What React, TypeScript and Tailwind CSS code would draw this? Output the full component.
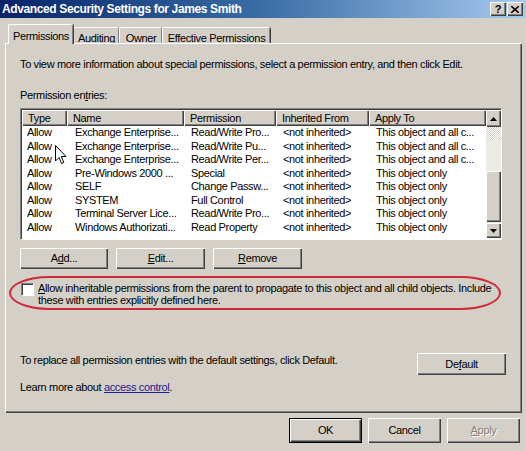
import React from 'react';

const raised = "shadow-[inset_1px_1px_0_#ffffff,inset_-1px_-1px_0_#404040,inset_-2px_-2px_0_#808080]";
const headerCell = "shadow-[inset_1px_1px_0_#ffffff,inset_-1px_-1px_0_#404040,inset_-2px_-2px_0_#808080]";

const columns = [
  { title: "Type", width: "w-[45px]" },
  { title: "Name", width: "w-[117px]" },
  { title: "Permission", width: "w-[92px]" },
  { title: "Inherited From", width: "w-[93px]" },
  { title: "Apply To", width: "w-[117px]" },
];

const rows = [
  ["Exchange Enterprise...", "Read/Write Pro...", "This object and all c..."],
  ["Exchange Enterprise...", "Read/Write Pu...", "This object and all c..."],
  ["Exchange Enterprise...", "Read/Write Per...", "This object and all c..."],
  ["Pre-Windows 2000 ...", "Special", "This object only"],
  ["SELF", "Change Passw...", "This object only"],
  ["SYSTEM", "Full Control", "This object only"],
  ["Terminal Server Lice...", "Read/Write Pro...", "This object only"],
  ["Windows Authorizati...", "Read Property", "This object only"],
];

const tabs = [
  { title: "Auditing", width: "w-[46px]" },
  { title: "Owner", width: "w-[43px]" },
  { title: "Effective Permissions", width: "w-[108px]" },
];

const Button = ({ children, className = "" }: { children: React.ReactNode; className?: string }) => (
  <button className={`flex items-center justify-center bg-[#d4d0c8] ${raised} ${className}`}>{children}</button>
);

const Arrow = ({ down }: { down?: boolean }) => (
  <svg width="7" height="4" viewBox="0 0 7 4" className={down ? "rotate-180" : ""}>
    <path d="M3.5 0 L7 4 L0 4 Z" fill="#000" />
  </svg>
);

export default function App() {
  return (
    <div className="w-[526px] h-[451px] bg-[#d4d0c8] flex flex-col overflow-hidden text-[11px] text-black font-['Liberation_Sans',Arial,sans-serif] tracking-[-0.35px]">
      {/* title bar */}
      <div className="h-[18px] flex items-center justify-between pl-[2px] pr-[3px] bg-gradient-to-r from-[#0a246a] via-[#3a6ea5] to-[#a6caf0]">
        <span className="text-white font-bold text-[12px] tracking-[-0.38px]">Advanced Security Settings for James Smith</span>
        <div className="flex gap-[1px]">
          <div className={`w-[16px] h-[14px] bg-[#d4d0c8] ${raised} flex items-center justify-center font-bold text-[11px] leading-none`}>?</div>
          <div className={`w-[16px] h-[14px] bg-[#d4d0c8] ${raised} flex items-center justify-center`}>
            <svg width="8" height="7" viewBox="0 0 8 7">
              <path d="M0 0 L8 7 M8 0 L0 7" stroke="#000" strokeWidth="1.6" />
            </svg>
          </div>
        </div>
      </div>

      <div className="flex flex-col px-[5px] pt-[6px]">
        {/* tabs */}
        <div className="flex items-end pl-[3px] h-[19px]">
          <div className="relative z-10 w-[65px] h-[20px] -mb-[1px] pt-[3px] text-center bg-[#d4d0c8] border-l border-t border-white rounded-t-[2px] shadow-[inset_-1px_0_0_#808080,1px_0_0_#404040]">
            Permissions
          </div>
          {tabs.map((t) => (
            <div key={t.title} className={`${t.width} h-[16px] pt-[2px] text-center border-l border-t border-white rounded-t-[2px] shadow-[inset_-1px_0_0_#808080,1px_0_0_#404040]`}>
              {t.title}
            </div>
          ))}
        </div>

        {/* panel */}
        <div className="h-[369px] flex flex-col border-l border-t border-white shadow-[inset_-1px_-1px_0_#808080,1px_1px_0_#404040] pl-[14px] pr-[15px] pt-[14px] pb-[18px]">
          <p className="leading-[13px]">To view more information about special permissions, select a permission entry, and then click Edit.</p>
          <p className="leading-[13px] mt-[18px]">Permission en<span className="underline">t</span>ries:</p>

          {/* list */}
          <div className="relative mt-[6px] w-[482px] h-[132px] flex bg-white border border-t-[#808080] border-l-[#808080] border-r-white border-b-white shadow-[inset_1px_1px_0_#404040]">
            <div className="flex flex-col pl-[1px] pt-[1px]">
              <div className="flex h-[16px]">
                {columns.map((c) => (
                  <div key={c.title} className={`${c.width} ${headerCell} bg-[#d4d0c8] pl-[6px] leading-[16px]`}>{c.title}</div>
                ))}
              </div>
              {rows.map((r, i) => (
                <div key={i} className="flex h-[13.5px] leading-[13.5px] whitespace-nowrap">
                  <div className="w-[45px] pl-[5px]">Allow</div>
                  <div className="w-[117px] pl-[8px]">{r[0]}</div>
                  <div className="w-[92px] pl-[7px]">{r[1]}</div>
                  <div className="w-[93px] pl-[7px]">&lt;not inherited&gt;</div>
                  <div className="w-[117px] pl-[7px]">{r[2]}</div>
                </div>
              ))}
            </div>
            {/* scrollbar */}
            <div className="w-[15px] mt-[1px] mb-[1px] flex flex-col bg-[#e8e6e0]">
              <div className={`h-[17px] flex items-center justify-center bg-[#d4d0c8] ${raised}`}><Arrow /></div>
              <div className="h-[13px] bg-[repeating-conic-gradient(#ffffff_0_25%,#d4d0c8_0_50%)] bg-[length:2px_2px]" />
              <div className="h-[31px] bg-[#eceae4]" />
              <div className={`h-[51px] bg-[#d4d0c8] ${raised}`} />
              <div className="flex-1" />
              <div className={`h-[15px] flex items-center justify-center bg-[#d4d0c8] ${raised}`}><Arrow down /></div>
            </div>
            {/* mouse pointer */}
            <svg width="13" height="20" viewBox="0 0 13 20" className="absolute left-[34px] top-[36px]">
              <path d="M0.5 0.5 L0.5 16 L4 12.5 L6.5 18.5 L8.8 17.5 L6.3 11.5 L11 11.5 Z" fill="#fff" stroke="#000" strokeWidth="1" />
            </svg>
          </div>

          {/* buttons */}
          <div className="flex gap-[8px] mt-[8px]">
            <Button className="w-[88px] h-[21px]">A<span className="underline">d</span>d...</Button>
            <Button className="w-[89px] h-[21px]"><span className="underline">E</span>dit...</Button>
            <Button className="w-[89px] h-[21px]"><span className="underline">R</span>emove</Button>
          </div>

          {/* inherit checkbox */}
          <div className="relative flex gap-[4px] mt-[13px] pl-[1px]">
            <div className="absolute -left-[11px] -top-[6px] w-[492px] h-[34px] border-2 border-[#d02a3a] rounded-[40px/17px]" />
            <div className="w-[13px] h-[13px] mt-[1px] bg-white border border-t-[#808080] border-l-[#808080] border-r-white border-b-white shadow-[inset_1px_1px_0_#404040]" />
            <p className="leading-[12px]">
              <span className="underline">A</span>llow inheritable permissions from the parent to propagate to this object and all child objects. Include<br />
              these with entries explicitly defined here.
            </p>
          </div>

          {/* default */}
          <div className="mt-auto flex justify-between items-start">
            <p className="leading-[13px] mt-[1px]">To replace all permission entries with the default settings, click Default.</p>
            <Button className="w-[89px] h-[22px]">De<span className="underline">f</span>ault</Button>
          </div>
          <p className="leading-[13px] mt-[6px]">
            Learn more about <span className="underline text-[#1c1c8c]">access control</span>.
          </p>
        </div>

        {/* dialog buttons */}
        <div className="flex justify-end gap-[6px] mt-[6px] pr-[1px]">
          <button className="w-[73px] h-[25px] border border-black bg-[#d4d0c8] shadow-[inset_1px_1px_0_#ffffff,inset_-1px_-1px_0_#404040,inset_-2px_-2px_0_#808080]">OK</button>
          <Button className="w-[73px] h-[25px]">Cancel</Button>
          <Button className="w-[73px] h-[25px] text-[#808080] [text-shadow:1px_1px_0_#ffffff]"><span className="underline">A</span>pply</Button>
        </div>
      </div>
    </div>
  );
}
